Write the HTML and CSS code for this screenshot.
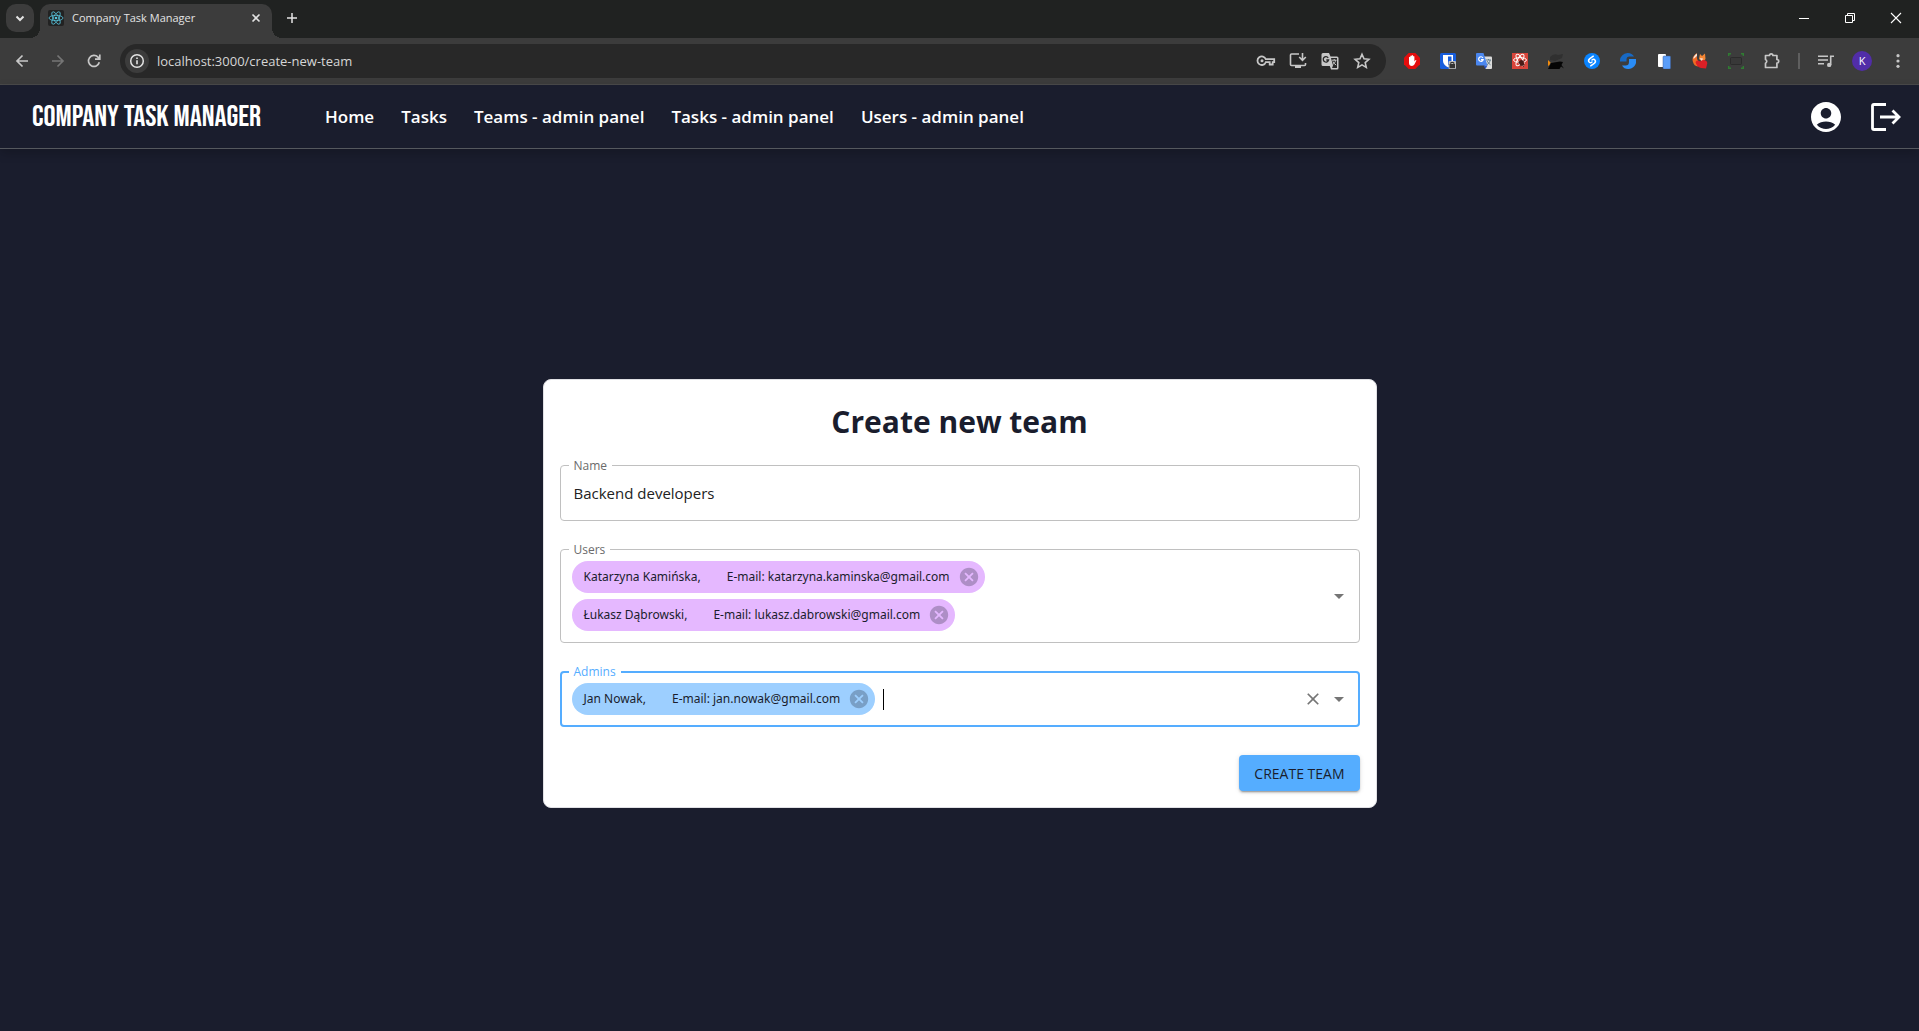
FILE: index.html
```html
<!DOCTYPE html>
<html lang="en">
<head>
<meta charset="utf-8">
<title>Company Task Manager</title>
<link rel="stylesheet" href="styles.css">
</head>
<body>
<div class="tabstrip">
  <button class="tab-search" aria-label="Search tabs"><svg width="16" height="16" viewBox="0 0 16 16"><path d="M4.5 6.5 8 10l3.500-3.500" fill="none" stroke="currentColor" stroke-width="2"/></svg></button>
  <div class="tab">
    <svg class="favicon" width="16" height="16" viewBox="0 0 16 16"><rect width="16" height="16" rx="2" fill="#222"/><g fill="none" stroke="#58c4dc" stroke-width=".8"><ellipse cx="8" cy="8" rx="7" ry="2.700"/><ellipse cx="8" cy="8" rx="7" ry="2.700" transform="rotate(60 8 8)"/><ellipse cx="8" cy="8" rx="7" ry="2.700" transform="rotate(120 8 8)"/></g><circle cx="8" cy="8" r="1.300" fill="#58c4dc"/></svg>
    <span class="tab-title">Company Task Manager</span>
    <button class="icon-btn tab-close" aria-label="Close tab"><svg width="16" height="16" viewBox="0 0 16 16"><path d="m4.500 4.500 7 7m0-7-7 7" stroke="currentColor" stroke-width="1.600"/></svg></button>
  </div>
  <button class="icon-btn new-tab" aria-label="New tab"><svg width="16" height="16" viewBox="0 0 16 16"><path d="M8 3v10M3 8h10" stroke="currentColor" stroke-width="1.500"/></svg></button>
  <div class="window-buttons">
    <button class="icon-btn" aria-label="Minimize"><svg width="12" height="12" viewBox="0 0 12 12"><path d="M1 6.500h10" stroke="currentColor"/></svg></button>
    <button class="icon-btn" aria-label="Restore"><svg width="12" height="12" viewBox="0 0 12 12"><path d="M1.500 3.500h7v7h-7zM3.500 3.500v-2h7v7h-2" fill="none" stroke="currentColor"/></svg></button>
    <button class="icon-btn" aria-label="Close window"><svg width="12" height="12" viewBox="0 0 12 12"><path d="m1 1 10 10M11 1 1 11" stroke="currentColor" stroke-width="1.100"/></svg></button>
  </div>
</div>

<div class="toolbar">
  <button class="icon-btn" aria-label="Back"><svg width="16" height="16" viewBox="0 0 16 16"><path d="M14 8H3m5.500-5.500L3 8l5.500 5.500" fill="none" stroke="currentColor" stroke-width="1.700"/></svg></button>
  <button class="icon-btn dim" aria-label="Forward"><svg width="16" height="16" viewBox="0 0 16 16"><path d="M2 8h11M7.500 2.500 13 8l-5.500 5.500" fill="none" stroke="currentColor" stroke-width="1.700"/></svg></button>
  <button class="icon-btn" aria-label="Reload"><svg width="16" height="16" viewBox="0 0 16 16"><path d="M13.300 9.300A5.500 5.500 0 1 1 12 4.200l1.500 1.500M13.800 1.500v4.700H9" fill="none" stroke="currentColor" stroke-width="1.700"/></svg></button>
  <div class="omnibox">
    <button class="icon-btn site-info" aria-label="Site information"><svg width="16" height="16" viewBox="0 0 16 16"><circle cx="8" cy="8" r="6.300" fill="none" stroke="currentColor" stroke-width="1.500"/><path d="M8 7.200v4M8 4.500v1.600" stroke="currentColor" stroke-width="1.600"/></svg></button>
    <input class="url" type="text" aria-label="Address" value="localhost:3000/create-new-team">
    <button class="icon-btn" aria-label="Passwords"><svg width="20" height="20" viewBox="0 0 20 20"><path d="M9.800 8.200h8.400v3h-1.500v2.300h-3v-2.300H9.800A4.300 4.300 0 1 1 9.800 8.200z" fill="none" stroke="currentColor" stroke-width="1.800"/><circle cx="6" cy="9.800" r="1.500" fill="currentColor"/></svg></button>
    <button class="icon-btn" aria-label="Install app"><svg width="20" height="20" viewBox="0 0 20 20"><path d="M11 3H3.500a1 1 0 0 0-1 1v9.500a1 1 0 0 0 1 1h13a1 1 0 0 0 1-1V12" fill="none" stroke="currentColor" stroke-width="1.600"/><path d="M7 14.500h6V17H7z" fill="currentColor"/><path d="M14.500 2v7m-3.300-3 3.300 3.300L17.800 6" fill="none" stroke="currentColor" stroke-width="1.600"/></svg></button>
    <button class="icon-btn" aria-label="Translate"><svg width="20" height="20" viewBox="0 0 20 20"><path d="M3 2h6l1.500 3.500H17a1.500 1.500 0 0 1 1.500 1.500v10a1.500 1.500 0 0 1-1.500 1.500h-6L9.800 15H3a1.500 1.500 0 0 1-1.500-1.500v-10A1.500 1.500 0 0 1 3 2z" fill="currentColor"/><path d="M11 7h6v10h-5l1-2.500z" fill="#282828"/><path d="M8.200 6.800A2.700 2.700 0 1 0 8.600 9H6.300" fill="none" stroke="#282828" stroke-width="1.300"/><path d="M12 9.200h4.500M14.200 8v1.200m1.500 0c-.4 2-1.500 3.300-3 4.300m.3-3c.6 1.500 1.700 2.600 3.200 3.600" fill="none" stroke="currentColor"/></svg></button>
    <button class="icon-btn" aria-label="Bookmark"><svg width="20" height="20" viewBox="0 0 20 20"><path d="m10 3.300 2 4.500 4.900.5-3.700 3.300 1.100 4.800-4.300-2.500-4.300 2.500 1.100-4.800L3.100 8.300l4.900-.5z" fill="none" stroke="currentColor" stroke-width="1.600"/></svg></button>
  </div>
  <div class="extensions">
    <button class="icon-btn" aria-label="Ad blocker"><svg width="16" height="16" viewBox="0 0 16 16"><path d="M4.700 0h6.600L16 4.700v6.600L11.300 16H4.700L0 11.300V4.700z" fill="#e40d0d"/><path d="M5 8V4.200q.7-.8 1.300 0V7V3q.7-.9 1.400 0v4V2.500q.7-.8 1.400 0V7V3.500q.7-.8 1.300 0v5l1-1.300q1-.4 1 .4l-2 4Q9.500 13 8 13q-3 0-3-3z" fill="#fff"/></svg></button>
    <button class="icon-btn" aria-label="Password vault"><svg width="16" height="16" viewBox="0 0 16 16"><rect width="16" height="16" rx="1.500" fill="#175ddc"/><path d="M3 2h10v6c0 3-2.500 5-5 6.300C5.500 13 3 11 3 8z" fill="#fff"/><path d="M8 3.500h3.500V8c0 2-1.500 3.500-3.500 4.500z" fill="#175ddc"/><rect x="8.500" y="8" width="7.500" height="8" rx="1" fill="#bdbdbd"/><rect x="9.500" y="11" width="5.500" height="4.200" fill="#333"/><path d="M10.800 11.500V9.500h3v2" fill="none" stroke="#333"/></svg></button>
    <button class="icon-btn" aria-label="Page translator"><svg width="16" height="16" viewBox="0 0 16 16"><path d="M6 3.500h9a1 1 0 0 1 1 1V15a1 1 0 0 1-1 1H9.500z" fill="#dcdcdc"/><path d="M10 7h5m-2.500-1v1m1.700 0c-.4 2.200-1.700 3.700-3.200 4.700m.3-3.500c.7 1.500 1.800 2.700 3.200 3.600" fill="none" stroke="#607d8b"/><path d="M1 0h6.500l4 12.500H1a1 1 0 0 1-1-1V1a1 1 0 0 1 1-1z" fill="#4a86ee"/><path d="M7.500 12.500h4L9.500 16z" fill="#2a56c6"/><path d="M6.900 4.800A2.300 2.300 0 1 0 7.200 6.600H5" fill="none" stroke="#fff" stroke-width="1.200"/></svg></button>
    <button class="icon-btn" aria-label="Component inspector"><svg width="16" height="16" viewBox="0 0 16 16"><rect width="16" height="16" fill="#d9453b"/><g fill="none" stroke="#fff"><ellipse cx="8" cy="7" rx="6.500" ry="2.400"/><ellipse cx="8" cy="7" rx="6.500" ry="2.400" transform="rotate(60 8 7)"/><ellipse cx="8" cy="7" rx="6.500" ry="2.400" transform="rotate(120 8 7)"/></g><ellipse cx="9.500" cy="10" rx="2.300" ry="3" fill="#4a1a16" transform="rotate(-30 9.500 10)"/><path d="m6 9 7 3m-.5-5L8 13.500M10 7l1.500 7" stroke="#4a1a16" stroke-width=".8"/></svg></button>
    <button class="icon-btn" aria-label="Dark cat"><svg width="16" height="16" viewBox="0 0 16 16"><path d="M2 4q4-4 8-2l5-1-1 4-7 3-5-1z" fill="#303030"/><path d="M0 7 2.500 9.500 1.500 12 0 13z" fill="#f28b0c"/><path d="m3 10 9-1.500 3 .5-1.500 3 2.500 3.500-3-2-1.500 2.500H0l2-4z" fill="#050505"/></svg></button>
    <button class="icon-btn" aria-label="Song finder"><svg width="16" height="16" viewBox="0 0 16 16"><circle cx="8" cy="8" r="8" fill="#0a84ff"/><path d="M9.300 3.200 5.800 5.600Q3.800 7.200 5 8.900T8 9M6.700 12.800l3.500-2.400q2-1.600.8-3.300T8 7" fill="none" stroke="#fff" stroke-width="1.500" stroke-linecap="round"/></svg></button>
    <button class="icon-btn" aria-label="Sync"><svg width="16" height="16" viewBox="0 0 16 16"><path d="M0 8.500A7.800 7.800 0 0 1 8 0q4 0 6 3.500H9.500Q6.500 3.500 6.500 6.500v2z" fill="#1769c4"/><path d="M16 6a8 8 0 0 1-8 10q-4 0-6-3.500h3.500q3.500 0 3.500-3.500V6z" fill="#2a8cf5"/></svg></button>
    <button class="icon-btn" aria-label="Tab copier"><svg width="16" height="16" viewBox="0 0 16 16"><rect x="2" y="1" width="8" height="13" rx="1" fill="#fff"/><rect x="7" y="3" width="7.500" height="13" rx="1" fill="#5a9df8" stroke="#3c5f9c" stroke-width=".5"/></svg></button>
    <button class="icon-btn" aria-label="Fox"><svg width="16" height="16" viewBox="0 0 16 16"><path d="M5 0Q-1 4 1 9q1 4 5 4.500L6.500 9Q4 5 5 0z" fill="#ef6a24"/><path d="M5 .5Q1 3 1.500 6L5 3z" fill="#f4e3d7"/><path d="m7 6 1-5 2 2 3-2.500L13.500 6 11 9z" fill="#f58634"/><path d="m8 5 3 .5L9.500 9z" fill="#f8d9cf"/><path d="M3.500 9Q5.500 6.500 8 8.500q2.500-2.500 5.500-1Q16 9 15 11.500l-1 4-5-.5Q4.500 14 3.500 9z" fill="#dc1f26"/></svg></button>
    <button class="icon-btn" aria-label="Screenshot"><svg width="16" height="16" viewBox="0 0 16 16"><path d="M.7 3V.7H3M13 .7h2.300V3M15.300 13v2.300H13M3 15.300H.7V13" fill="none" stroke="#2f7d32" stroke-width="1.400"/><rect x="2.500" y="4.500" width="11" height="7" rx="1" fill="#383838" stroke="#2b2b2b"/></svg></button>
    <button class="icon-btn" aria-label="Extensions"><svg width="18" height="18" viewBox="0 0 18 18"><path d="M2.500 3.500h4a1.700 1.700 0 0 1 3.400 0h4v4a1.700 1.700 0 0 1 0 3.600v4.400H2.500v-4.300a2 2 0 0 0 0-3.700z" fill="none" stroke="currentColor" stroke-width="1.700" stroke-linejoin="round"/></svg></button>
  </div>
  <span class="divider"></span>
  <button class="icon-btn" aria-label="Media controls"><svg width="16" height="16" viewBox="0 0 16 16"><path d="M0 3.300h10M0 7h10M0 10.700h6M12.700 12V3.300H16" fill="none" stroke="currentColor" stroke-width="1.600"/><circle cx="11.200" cy="11.900" r="2.200" fill="currentColor"/></svg></button>
  <button class="icon-btn" aria-label="Profile"><span class="avatar">K</span></button>
  <button class="icon-btn" aria-label="Menu"><svg width="16" height="16" viewBox="0 0 16 16" fill="currentColor"><circle cx="8" cy="2.700" r="1.600"/><circle cx="8" cy="8" r="1.600"/><circle cx="8" cy="13.300" r="1.600"/></svg></button>
</div>

<header class="app-header">
  <a class="logo" href="#">COMPANY TASK MANAGER</a>
  <nav class="nav">
    <a href="#">Home</a>
    <a href="#">Tasks</a>
    <a href="#">Teams - admin panel</a>
    <a href="#">Tasks - admin panel</a>
    <a href="#">Users - admin panel</a>
  </nav>
  <div class="account">
    <button class="icon-btn" aria-label="Account"><svg width="36" height="36" viewBox="0 0 24 24" fill="currentColor"><path d="M12 2C6.480 2 2 6.480 2 12s4.480 10 10 10 10-4.480 10-10S17.520 2 12 2zm0 4c1.930 0 3.500 1.570 3.500 3.500S13.930 13 12 13s-3.500-1.570-3.500-3.500S10.070 6 12 6zm0 14c-2.030 0-4.430-.820-6.140-2.880C7.550 15.800 9.680 15 12 15s4.450.800 6.140 2.120C16.430 19.180 14.030 20 12 20z"/></svg></button>
    <button class="icon-btn" aria-label="Log out"><svg width="32" height="32" viewBox="0 0 32 32" fill="none" stroke="currentColor" stroke-width="2.800"><path d="M16 3.500H4a1.500 1.500 0 0 0-1.500 1.500v22a1.500 1.500 0 0 0 1.500 1.500h12M10 16H29.500M22.500 9.500 29 16l-6.500 6.500"/></svg></button>
  </div>
</header>

<main class="page">
  <form class="card">
    <h1>Create new team</h1>
    <fieldset class="field">
      <legend><label for="name">Name</label></legend>
      <input class="text-input" id="name" type="text" value="Backend developers">
    </fieldset>
    <fieldset class="field">
      <legend><label for="users">Users</label></legend>
      <div class="picker">
        <div class="chips">
          <span class="chip"><span>Katarzyna Kamińska,</span><span>E-mail: katarzyna.kaminska@gmail.com</span><button type="button" aria-label="Remove Katarzyna Kamińska"><svg width="22" height="22" viewBox="0 0 24 24"><path d="M12 2C6.470 2 2 6.470 2 12s4.470 10 10 10 10-4.470 10-10S17.530 2 12 2zm5 13.590L15.590 17 12 13.410 8.410 17 7 15.590 10.590 12 7 8.410 8.410 7 12 10.590 15.590 7 17 8.410 13.410 12 17 15.590z"/></svg></button></span>
          <span class="chip"><span>Łukasz Dąbrowski,</span><span>E-mail: lukasz.dabrowski@gmail.com</span><button type="button" aria-label="Remove Łukasz Dąbrowski"><svg width="22" height="22" viewBox="0 0 24 24"><path d="M12 2C6.470 2 2 6.470 2 12s4.470 10 10 10 10-4.470 10-10S17.530 2 12 2zm5 13.590L15.590 17 12 13.410 8.410 17 7 15.590 10.590 12 7 8.410 8.410 7 12 10.590 15.590 7 17 8.410 13.410 12 17 15.590z"/></svg></button></span>
          <input class="picker-input" id="users" type="text">
        </div>
        <button type="button" class="icon-btn picker-btn" aria-label="Open users"><svg width="24" height="24" viewBox="0 0 24 24" fill="currentColor"><path d="m7 10 5 5 5-5z"/></svg></button>
      </div>
    </fieldset>
    <fieldset class="field focused">
      <legend><label for="admins">Admins</label></legend>
      <div class="picker">
        <div class="chips">
          <span class="chip blue"><span>Jan Nowak,</span><span>E-mail: jan.nowak@gmail.com</span><button type="button" aria-label="Remove Jan Nowak"><svg width="22" height="22" viewBox="0 0 24 24"><path d="M12 2C6.470 2 2 6.470 2 12s4.470 10 10 10 10-4.470 10-10S17.530 2 12 2zm5 13.590L15.590 17 12 13.410 8.410 17 7 15.590 10.590 12 7 8.410 8.410 7 12 10.590 15.590 7 17 8.410 13.410 12 17 15.590z"/></svg></button></span>
          <span class="caret"></span>
          <input class="picker-input" id="admins" type="text">
        </div>
        <button type="button" class="icon-btn picker-btn" aria-label="Clear admins"><svg width="20" height="20" viewBox="0 0 24 24" fill="currentColor"><path d="M19 6.410 17.590 5 12 10.590 6.410 5 5 6.410 10.590 12 5 17.590 6.410 19 12 13.410 17.590 19 19 17.590 13.410 12z"/></svg></button>
        <button type="button" class="icon-btn picker-btn" aria-label="Open admins"><svg width="24" height="24" viewBox="0 0 24 24" fill="currentColor"><path d="m7 10 5 5 5-5z"/></svg></button>
      </div>
    </fieldset>
    <button class="submit" type="submit">CREATE TEAM</button>
  </form>
</main>
</body>
</html>
```

FILE: styles.css
```css
* { box-sizing: border-box; }

body {
  margin: 0;
  min-height: 100vh;
  display: flex;
  flex-direction: column;
  background: #1a1d2d;
  color: #1a1d2d;
  font-family: "Open Sans", "Noto Sans", sans-serif;
}

button, input { font: inherit; color: inherit; border: 0; background: none; padding: 0; margin: 0; outline: 0; }
a { color: inherit; text-decoration: none; }
svg { display: block; flex: none; }

.icon-btn { display: flex; align-items: center; justify-content: center; flex: none; }

/* Browser tab strip */
.tabstrip {
  display: flex;
  height: 38px;
  padding-left: 6px;
  background: #202221;
  color: #e3e3e3;
}
.tab-search {
  display: flex;
  align-items: center;
  justify-content: center;
  width: 28px;
  height: 28px;
  margin: 4px 6px 0 0;
  border-radius: 10px;
  background: #3c3c3c;
}
.tab {
  position: relative;
  display: flex;
  align-items: center;
  gap: 8px;
  width: 232px;
  margin-top: 4px;
  padding: 0 8px 6px;
  border-radius: 10px 10px 0 0;
  background: #3c3c3c;
}
.tab::before, .tab::after {
  content: "";
  position: absolute;
  bottom: 0;
  width: 10px;
  height: 10px;
}
.tab::before { right: 100%; background: radial-gradient(circle at 0 0, transparent 10px, #3c3c3c 10px); }
.tab::after { left: 100%; background: radial-gradient(circle at 100% 0, transparent 10px, #3c3c3c 10px); }
.tab-title { flex: 1; font-size: 11px; line-height: 16px; white-space: nowrap; }
.tab-close { width: 16px; height: 16px; }
.new-tab { width: 40px; height: 36px; }
.window-buttons { display: flex; margin-left: auto; color: #fff; }
.window-buttons .icon-btn { width: 46px; height: 36px; }

/* Browser toolbar */
.toolbar {
  display: flex;
  align-items: center;
  height: 47px;
  padding: 0 3px 0 4px;
  border-bottom: 1px solid #4a4a4a;
  background: #3c3c3c;
  color: #c7c7c7;
}
.toolbar .icon-btn { width: 36px; height: 34px; }
.toolbar .dim { color: #757575; }
.toolbar .omnibox {
  flex: 1;
  display: flex;
  align-items: center;
  height: 34px;
  margin: 0 8px;
  padding: 0 8px 0 5px;
  border-radius: 17px;
  background: #282828;
}
.omnibox .icon-btn { width: 32px; }
.toolbar .site-info { width: 24px; height: 24px; border-radius: 50%; background: #3c3c3c; color: #e3e3e3; }
.url { flex: 1; min-width: 0; padding-left: 8px; font-size: 13px; color: #d6d6d6; }
.extensions { display: flex; }
.divider { width: 2px; height: 16px; margin: 0 8px; background: #5f5f5f; }
.avatar {
  width: 20px;
  height: 20px;
  border-radius: 50%;
  background: #512da8;
  color: #fff;
  font-size: 11px;
  line-height: 20px;
  text-align: center;
}

/* Application header */
.app-header {
  display: flex;
  align-items: center;
  height: 64px;
  padding: 0 17px 0 32px;
  border-bottom: 1px solid #55585e;
  box-shadow: 0 4px 10px rgba(0, 0, 0, .2);
  color: #fff;
}
.logo {
  flex: none;
  min-width: 293px;
  font: 30px/32px "Bebas Neue", "Liberation Sans Narrow", Roboto, sans-serif;
  white-space: nowrap;
}
.nav { display: flex; gap: 27px; font-size: 17px; font-weight: 600; line-height: 24px; white-space: nowrap; }
.account { display: flex; align-items: center; gap: 26px; margin-left: auto; }

/* Form card */
.page {
  flex: 1;
  display: flex;
  align-items: center;
  justify-content: center;
  padding: 7px 16px 0;
}
.card {
  display: flex;
  flex-direction: column;
  gap: 21px;
  width: 100%;
  max-width: 834px;
  padding: 16px;
  border: 1px solid #e0e0e4;
  border-radius: 8px;
  background: #fff;
}
.card h1 { margin: 0 0 -11px; font-size: 30px; line-height: 52px; font-weight: 700; text-align: center; }
.field {
  min-width: 0;
  margin: 0;
  padding: 0 7px 0 8px;
  border: 1px solid #c0c0c0;
  border-radius: 4px;
}
.field legend { padding: 0 5px; font-size: 12px; line-height: 15px; color: #6b6b6b; }
.field label { display: block; }
.focused { border: 2px solid #55adff; padding: 0 6px 0 7px; }
.focused legend { color: #55adff; }
.text-input { display: block; width: 100%; height: 40px; margin-bottom: 7px; padding: 0 5px; font-size: 15px; color: #222; }
.picker { display: flex; align-items: center; }
.chips { flex: 1; display: flex; flex-wrap: wrap; align-items: center; gap: 6px 8px; padding: 4px 3px 11px; }
.focused .chips { padding-bottom: 10px; }
.chip {
  display: flex;
  align-items: center;
  gap: 26px;
  height: 32px;
  padding: 0 5px 0 12px;
  border-radius: 16px;
  background: #e5b8ff;
  font-family: "Noto Sans", "Open Sans", sans-serif;
  font-size: 12px;
  line-height: 16px;
  white-space: nowrap;
}
.chip.blue { background: #9dcfff; }
.chip button { margin-left: -18px; color: inherit; }
.chip svg { fill: rgba(26, 29, 45, .27); }
.caret { width: 1px; height: 21px; background: #000; }
.picker-input { flex: 1; width: 32px; min-width: 32px; height: 21px; font-size: 15px; }
.picker-btn { width: 26px; height: 28px; margin-bottom: 7px; color: #757575; }
.submit {
  align-self: flex-end;
  height: 36px;
  margin-top: 7px;
  padding: 0 15px;
  border-radius: 4px;
  background: #55adff;
  box-shadow: 0 3px 1px -2px rgba(0, 0, 0, .2), 0 2px 2px rgba(0, 0, 0, .14), 0 1px 5px rgba(0, 0, 0, .12);
  font-size: 14px;
  font-weight: 500;
}
```
